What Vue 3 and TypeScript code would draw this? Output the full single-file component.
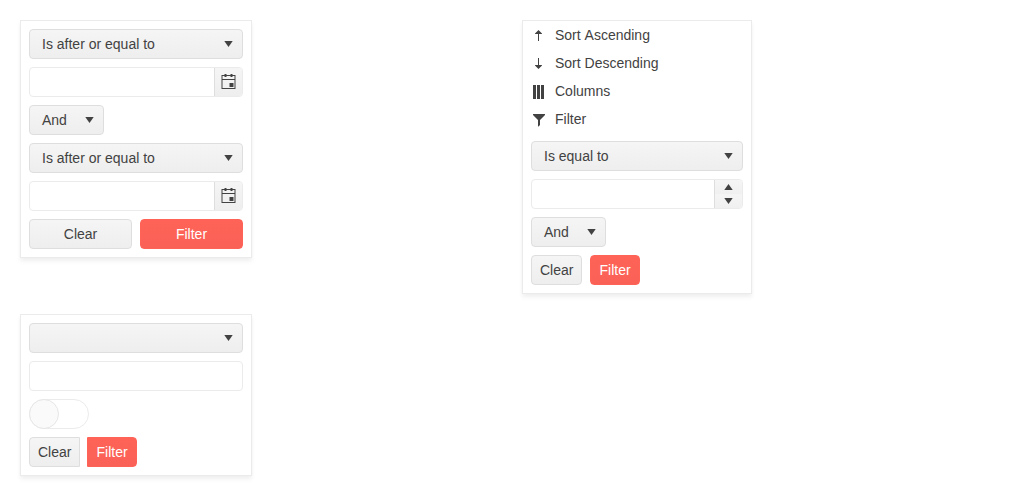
<script setup lang="ts">
import { ref } from 'vue'

interface MenuItem {
  label: string
  path: string
}

const menuItems: MenuItem[] = [
  { label: 'Sort Ascending', path: 'M7 14V7H4V6.5L7.5 3L11 6.5V7H8V14z' },
  { label: 'Sort Descending', path: 'M7 3V10H4V10.5L7.5 14L11 10.5V10H8V3z' },
  { label: 'Columns', path: 'M2 2h3v14H2zM6 2h3v14H6zM10 2h3v14h-3z' },
  { label: 'Filter', path: 'M2 3h12v1L9 9v5l-1.5 1.5H7V9L2 4z' },
]

const arrowDown = 'M4.3 5h8.4L8.5 11z'
const dates = ref<string[]>(['', ''])
const amount = ref('')
const text = ref('')
</script>

<template>
  <main class="board">
    <div class="column">
      <section class="panel">
        <template v-for="(_, i) in dates" :key="i">
          <div class="dropdown">
            <span>Is after or equal to</span>
            <svg class="icon" viewBox="0 0 16 16"><path :d="arrowDown" /></svg>
          </div>
          <div class="field">
            <input v-model="dates[i]" class="input" aria-label="Date" />
            <span class="picker">
              <svg class="icon" viewBox="0.5 0 16 16">
                <path d="M1 3h14v1H1zM1 7h14v1H1zM1 16h14v1H1zM4 2h2v3H4zM10 2h2v3h-2zM9 11h4v4H9zM1 4h1v3H1zM1 8h1v8H1zM14 4h1v3h-1zM14 8h1v8h-1z" />
              </svg>
            </span>
          </div>
          <div v-if="i === 0" class="dropdown logic">
            <span>And</span>
            <svg class="icon" viewBox="0 0 16 16"><path :d="arrowDown" /></svg>
          </div>
        </template>
        <div class="actions stretched">
          <button class="button">Clear</button>
          <button class="button primary">Filter</button>
        </div>
      </section>

      <section class="panel">
        <div class="dropdown">
          <span></span>
          <svg class="icon" viewBox="0 0 16 16"><path :d="arrowDown" /></svg>
        </div>
        <div class="field">
          <input v-model="text" class="input" aria-label="Value" />
        </div>
        <div class="switch"><span class="handle"></span></div>
        <div class="actions joined">
          <button class="button">Clear</button>
          <button class="button primary">Filter</button>
        </div>
      </section>
    </div>

    <section class="panel menu">
      <ul class="items">
        <li v-for="item in menuItems" :key="item.label" class="item">
          <svg class="icon" viewBox="0 0 16 16"><path :d="item.path" /></svg>
          <span>{{ item.label }}</span>
        </li>
      </ul>
      <div class="dropdown">
        <span>Is equal to</span>
        <svg class="icon" viewBox="0 0 16 16"><path :d="arrowDown" /></svg>
      </div>
      <div class="field">
        <input v-model="amount" class="input" aria-label="Amount" />
        <span class="spinner">
          <span class="step"><svg class="tri" viewBox="0 0 9 6"><path d="M.3 6L4.5 0l4.2 6z" /></svg></span>
          <span class="step"><svg class="tri" viewBox="0 0 9 6"><path d="M.3 0h8.4L4.5 6z" /></svg></span>
        </span>
      </div>
      <div class="dropdown logic">
        <span>And</span>
        <svg class="icon" viewBox="0 0 16 16"><path :d="arrowDown" /></svg>
      </div>
      <div class="actions">
        <button class="button">Clear</button>
        <button class="button primary">Filter</button>
      </div>
    </section>
  </main>
</template>

<style>
body {
  background: #fff;
}
</style>

<style scoped>
.board {
  display: grid;
  grid-template-columns: 232px 230px;
  column-gap: 270px;
  align-items: start;
  padding: 20px;
  color: #424242;
  font: 14px/20px "Liberation Sans", Arial, sans-serif;
}
.board * {
  box-sizing: border-box;
}
.column {
  display: grid;
  grid-template-columns: minmax(0, 1fr);
  gap: 56px;
}
.panel {
  display: flex;
  flex-direction: column;
  gap: 8px;
  padding: 8px;
  background: #fff;
  border: 1px solid #ebebeb;
  box-shadow: 0 2px 4px rgba(0, 0, 0, 0.03), 0 4px 5px rgba(0, 0, 0, 0.04);
}
.icon {
  flex: none;
  width: 16px;
  height: 16px;
  overflow: visible;
  fill: #424242;
}
.dropdown {
  display: flex;
  align-items: center;
  justify-content: space-between;
  height: 30px;
  padding: 0 6px 0 12px;
  border: 1px solid #dedede;
  border-radius: 4px;
  background: linear-gradient(#f5f5f5, #eeeeee);
}
.logic {
  width: 75px;
}
.field {
  display: flex;
  height: 30px;
  overflow: hidden;
  border: 1px solid #ebebeb;
  border-radius: 4px;
}
.input {
  flex: 1;
  min-width: 0;
  padding: 4px 8px;
  border: 0;
  outline: 0;
  background: transparent;
  color: inherit;
  font: inherit;
}
.picker,
.spinner {
  display: flex;
  flex: none;
  width: 28px;
  border-left: 1px solid #dedede;
}
.picker {
  justify-content: center;
  padding-top: 4px;
  background: linear-gradient(#f5f5f5, #eeeeee);
}
.spinner {
  flex-direction: column;
}
.step {
  display: flex;
  flex: 1;
  align-items: center;
  justify-content: center;
  background: linear-gradient(#f5f5f5, #f0f0f0);
}
.tri {
  width: 9px;
  height: 6px;
  fill: #424242;
}
.actions {
  display: flex;
  gap: 8px;
}
.button {
  height: 30px;
  padding: 4px 8px;
  border: 1px solid #dedede;
  border-radius: 4px;
  background: linear-gradient(#f5f5f5, #eeeeee);
  color: inherit;
  font: inherit;
}
.primary {
  border-color: #ff6358;
  background: linear-gradient(#ff6358, #fa6156) border-box;
  color: #fff;
}
.stretched .button {
  flex: 1;
}
.joined {
  gap: 7px;
}
.joined .button {
  border-radius: 4px 0 0 4px;
}
.joined .primary {
  border-radius: 0 4px 4px 0;
}
.switch {
  width: 60px;
  height: 30px;
  border: 1px solid #ebebeb;
  border-radius: 15px;
}
.handle {
  display: block;
  width: 30px;
  height: 30px;
  margin: -1px;
  border: 1px solid #e6e6e6;
  border-radius: 50%;
  background: #fafafa;
}
.items {
  margin: -8px -8px 0;
  padding: 0;
  list-style: none;
}
.item {
  display: flex;
  align-items: center;
  gap: 8px;
  height: 28px;
  padding: 0 8px;
  font-kerning: none;
}
</style>
